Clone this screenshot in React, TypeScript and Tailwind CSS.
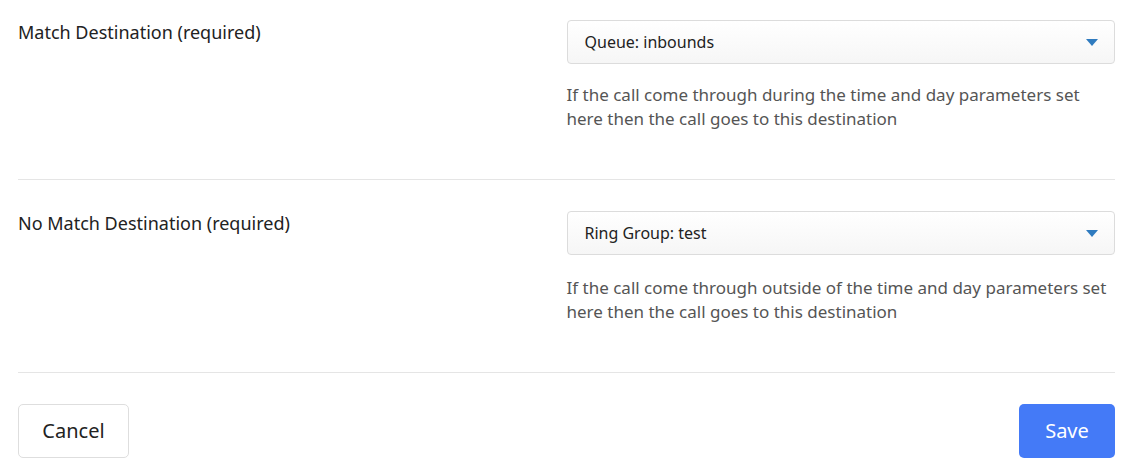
function Chevron() {
  return (
    <svg width="12" height="7" viewBox="0 0 12 7" className="shrink-0">
      <path d="M0 0h12L6 7z" fill="#2f7bbf" />
    </svg>
  );
}

function SelectBox({ value }: { value: string }) {
  return (
    <div className="flex h-[44px] items-center justify-between rounded-[4px] border border-[#dcdcdc] bg-gradient-to-b from-white to-[#f6f6f6] pl-[17px] pr-[16px] text-[16px] text-[#222]">
      <span>{value}</span>
      <Chevron />
    </div>
  );
}

function DestinationRow({
  label,
  value,
  hint,
  top,
  gap,
}: {
  label: string;
  value: string;
  hint: [string, string];
  top: string;
  gap: string;
}) {
  return (
    <div className={`${top} pb-[48px] border-b border-[#e5e5e5]`}>
      <div className="grid grid-cols-2">
        <div className="text-[18px] leading-[24px] text-[#222]">{label}</div>
        <div>
          <SelectBox value={value} />
          <p className={`${gap} text-[17px] leading-[24px] text-[#555]`}>
            {hint[0]}
            <br />
            {hint[1]}
          </p>
        </div>
      </div>
    </div>
  );
}

export default function App() {
  return (
    <div
      className="bg-white pl-[18px] pr-[21px]"
      style={{ fontFamily: "'Noto Sans', sans-serif" }}
    >
      <DestinationRow
        top="pt-[20px]"
        gap="mt-[19px]"
        label="Match Destination (required)"
        value="Queue: inbounds"
        hint={[
          "If the call come through during the time and day parameters set",
          "here then the call goes to this destination",
        ]}
      />
      <DestinationRow
        top="pt-[31px]"
        gap="mt-[21px]"
        label="No Match Destination (required)"
        value="Ring Group: test"
        hint={[
          "If the call come through outside of the time and day parameters set",
          "here then the call goes to this destination",
        ]}
      />
      <div className="flex items-center justify-between pt-[31px] pb-[16px]">
        <button className="h-[54px] w-[111px] rounded-[5px] border border-[#dedede] bg-white text-[20px] text-[#222]">
          Cancel
        </button>
        <button className="h-[54px] w-[96px] rounded-[5px] bg-[#447af7] text-[20px] text-white">
          Save
        </button>
      </div>
    </div>
  );
}
